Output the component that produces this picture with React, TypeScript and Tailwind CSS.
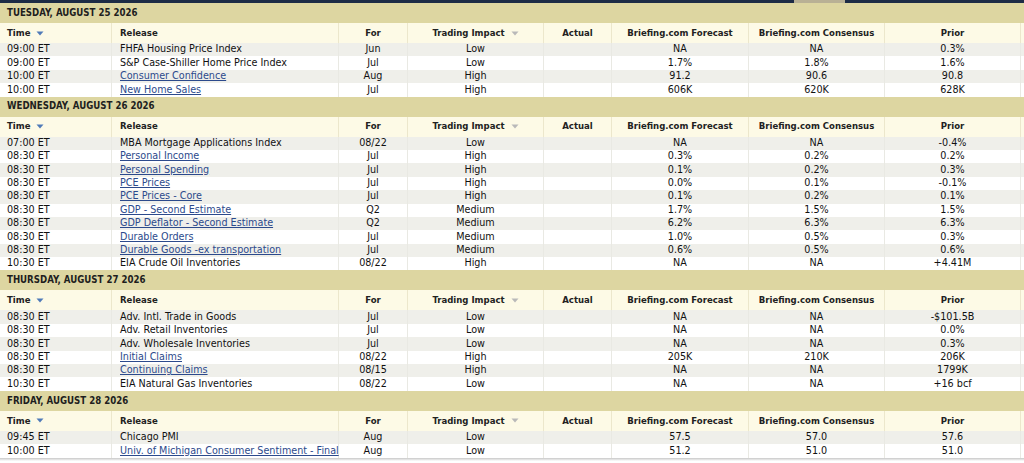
const COLS = 'grid grid-cols-[112px_227px_69px_136px_68px_137px_136px_136px]';

type Row = [string, string, boolean, string, string, string, string, string];

const days: { title: string; rows: Row[] }[] = [
  {
    title: 'TUESDAY, AUGUST 25 2026',
    rows: [
      ['09:00 ET', 'FHFA Housing Price Index', false, 'Jun', 'Low', 'NA', 'NA', '0.3%'],
      ['09:00 ET', 'S&P Case-Shiller Home Price Index', false, 'Jul', 'Low', '1.7%', '1.8%', '1.6%'],
      ['10:00 ET', 'Consumer Confidence', true, 'Aug', 'High', '91.2', '90.6', '90.8'],
      ['10:00 ET', 'New Home Sales', true, 'Jul', 'High', '606K', '620K', '628K'],
    ],
  },
  {
    title: 'WEDNESDAY, AUGUST 26 2026',
    rows: [
      ['07:00 ET', 'MBA Mortgage Applications Index', false, '08/22', 'Low', 'NA', 'NA', '-0.4%'],
      ['08:30 ET', 'Personal Income', true, 'Jul', 'High', '0.3%', '0.2%', '0.2%'],
      ['08:30 ET', 'Personal Spending', true, 'Jul', 'High', '0.1%', '0.2%', '0.3%'],
      ['08:30 ET', 'PCE Prices', true, 'Jul', 'High', '0.0%', '0.1%', '-0.1%'],
      ['08:30 ET', 'PCE Prices - Core', true, 'Jul', 'High', '0.1%', '0.2%', '0.1%'],
      ['08:30 ET', 'GDP - Second Estimate', true, 'Q2', 'Medium', '1.7%', '1.5%', '1.5%'],
      ['08:30 ET', 'GDP Deflator - Second Estimate', true, 'Q2', 'Medium', '6.2%', '6.3%', '6.3%'],
      ['08:30 ET', 'Durable Orders', true, 'Jul', 'Medium', '1.0%', '0.5%', '0.3%'],
      ['08:30 ET', 'Durable Goods -ex transportation', true, 'Jul', 'Medium', '0.6%', '0.5%', '0.6%'],
      ['10:30 ET', 'EIA Crude Oil Inventories', false, '08/22', 'High', 'NA', 'NA', '+4.41M'],
    ],
  },
  {
    title: 'THURSDAY, AUGUST 27 2026',
    rows: [
      ['08:30 ET', 'Adv. Intl. Trade in Goods', false, 'Jul', 'Low', 'NA', 'NA', '-$101.5B'],
      ['08:30 ET', 'Adv. Retail Inventories', false, 'Jul', 'Low', 'NA', 'NA', '0.0%'],
      ['08:30 ET', 'Adv. Wholesale Inventories', false, 'Jul', 'Low', 'NA', 'NA', '0.3%'],
      ['08:30 ET', 'Initial Claims', true, '08/22', 'High', '205K', '210K', '206K'],
      ['08:30 ET', 'Continuing Claims', true, '08/15', 'High', 'NA', 'NA', '1799K'],
      ['10:30 ET', 'EIA Natural Gas Inventories', false, '08/22', 'Low', 'NA', 'NA', '+16 bcf'],
    ],
  },
  {
    title: 'FRIDAY, AUGUST 28 2026',
    rows: [
      ['09:45 ET', 'Chicago PMI', false, 'Aug', 'Low', '57.5', '57.0', '57.6'],
      ['10:00 ET', 'Univ. of Michigan Consumer Sentiment - Final', true, 'Aug', 'Low', '51.2', '51.0', '51.0'],
    ],
  },
];

const SortArrow = ({ color }: { color: string }) => (
  <svg width="8" height="5" viewBox="0 0 8 5" className="ml-[6px] inline-block">
    <path d="M0.5 0.5h7L4 4.5z" fill={color} />
  </svg>
);

const HeaderRow = () => (
  <div className={`${COLS} h-[20px] bg-[#fdfae6] font-bold text-[9.5px] text-[#222] items-stretch`}>
    <div className="flex items-center pl-[7px] border-r border-[#ece7cc]">
      Time
      <SortArrow color="#4f7ab8" />
    </div>
    <div className="flex items-center pl-[8px] border-r border-[#ece7cc]">Release</div>
    <div className="flex items-center justify-center border-r border-[#ece7cc]">For</div>
    <div className="flex items-center justify-center border-r border-[#ece7cc]">
      Trading Impact
      <SortArrow color="#b9b9b9" />
    </div>
    <div className="flex items-center justify-center border-r border-[#ece7cc]">Actual</div>
    <div className="flex items-center justify-center border-r border-[#ece7cc]">Briefing.com Forecast</div>
    <div className="flex items-center justify-center border-r border-[#ece7cc]">Briefing.com Consensus</div>
    <div className="flex items-center justify-center border-r border-[#ece7cc]">Prior</div>
  </div>
);

const DataRow = ({ row, odd }: { row: Row; odd: boolean }) => {
  const [time, release, link, period, impact, forecast, consensus, prior] = row;
  const cell = 'flex items-center justify-center border-r border-[#e9e9e3]';
  return (
    <div className={`${COLS} h-[13.4px] leading-none text-[10.7px] text-[#111] ${odd ? 'bg-[#efefea]' : 'bg-white'}`}>
      <div className="flex items-center pl-[7px] border-r border-[#e9e9e3]">{time}</div>
      <div className="flex items-center pl-[8px] border-r border-[#e9e9e3] whitespace-nowrap">
        {link ? <span className="text-[#2c4a8c] underline">{release}</span> : release}
      </div>
      <div className={cell}>{period}</div>
      <div className={cell}>{impact}</div>
      <div className={cell}></div>
      <div className={cell}>{forecast}</div>
      <div className={cell}>{consensus}</div>
      <div className={cell}>{prior}</div>
    </div>
  );
};

export default function App() {
  return (
    <div className="w-[1024px] h-[463px] overflow-hidden bg-white font-['DejaVu_Sans_Condensed','DejaVu_Sans',sans-serif]">
      {/* top nav strip */}
      <div className="flex h-[3px] bg-[#1c2b45]">
        <div className="w-[794px]" />
        <div className="w-[51px] bg-[#b9b195]" />
      </div>

      {days.map((day) => (
        <div key={day.title}>
          <div className="h-[20px] bg-[#ddd6a1] flex items-center pl-[7px] font-bold text-[9.6px] text-[#1e1e1e]">
            {day.title}
          </div>
          <HeaderRow />
          {day.rows.map((r, i) => (
            <DataRow key={i} row={r} odd={i % 2 === 0} />
          ))}
        </div>
      ))}

      <div className="h-[3px] bg-gradient-to-b from-[#c8c8c8] to-white" />
    </div>
  );
}
